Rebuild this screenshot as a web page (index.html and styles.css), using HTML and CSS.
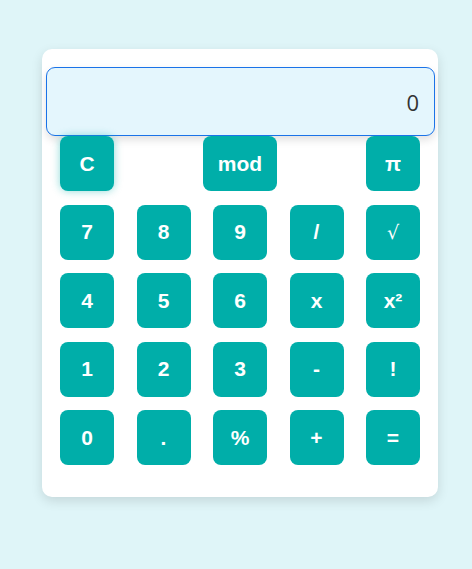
FILE: index.html
```html
<!DOCTYPE html>
<html>
<head>
<meta charset="utf-8">
<link rel="stylesheet" href="styles.css">
</head>
<body>
<div class="calc">
  <div class="display">0</div>
  <div class="keypad">
    <div class="top-row">
      <button class="key key-c">C</button>
      <button class="key key-wide">mod</button>
      <button class="key">π</button>
    </div>
    <div class="grid">
      <button class="key">7</button>
      <button class="key">8</button>
      <button class="key">9</button>
      <button class="key">/</button>
      <button class="key key-thin">√</button>
      <button class="key">4</button>
      <button class="key">5</button>
      <button class="key">6</button>
      <button class="key">x</button>
      <button class="key">x²</button>
      <button class="key">1</button>
      <button class="key">2</button>
      <button class="key">3</button>
      <button class="key">-</button>
      <button class="key">!</button>
      <button class="key">0</button>
      <button class="key">.</button>
      <button class="key">%</button>
      <button class="key">+</button>
      <button class="key">=</button>
    </div>
  </div>
</div>
</body>
</html>
```
FILE: styles.css
```css
html, body {
  margin: 0;
  padding: 0;
}
body {
  background: #dff5f8;
  width: 472px;
  height: 569px;
  font-family: "Liberation Sans", Arial, sans-serif;
}
.calc {
  position: relative;
  margin: 49px 0 0 42px;
  width: 396px;
  box-sizing: border-box;
  background: #ffffff;
  border-radius: 10px;
  padding: 18px 3px 32px 4px;
  box-shadow: 0 4px 12px rgba(0, 0, 0, 0.12);
}
.display {
  height: 69px;
  box-sizing: border-box;
  border: 1px solid #1a73e8;
  border-radius: 9px;
  background: #e4f6fd;
  display: flex;
  align-items: center;
  justify-content: flex-end;
  padding-right: 15px;
  font-family: "Open Sans", "Noto Sans", sans-serif;
  font-size: 22px;
  color: #333333;
  box-shadow: 0 4px 8px rgba(0, 0, 0, 0.12);
}
.keypad {
  padding: 0 15px 0 14px;
  display: flex;
  flex-direction: column;
  gap: 13.5px;
}
.top-row {
  display: flex;
  justify-content: space-between;
}
.grid {
  display: grid;
  grid-template-columns: repeat(5, 54px);
  justify-content: space-between;
  row-gap: 13.5px;
}
.key {
  width: 54px;
  height: 55px;
  border: none;
  border-radius: 8px;
  background: #00aea9;
  color: #ffffff;
  font-family: "Liberation Sans", Arial, sans-serif;
  font-weight: bold;
  font-size: 21px;
  padding: 0;
  margin: 0;
  display: flex;
  align-items: center;
  justify-content: center;
}
.key-wide {
  width: 74px;
}
.key-thin {
  font-family: "DejaVu Sans", sans-serif;
  font-weight: normal;
  font-size: 19px;
}
.key-c {
  box-shadow: 0 0 8px rgba(0, 174, 169, 0.45);
}
```
